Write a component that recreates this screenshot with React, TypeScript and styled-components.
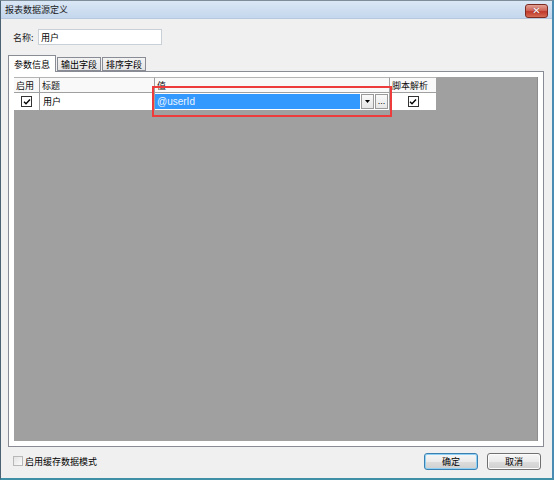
import React from "react";
import styled, { createGlobalStyle } from "styled-components";

const Global = createGlobalStyle`
  html, body { margin: 0; padding: 0; background: #ffffff; }
  #root { width: 554px; height: 480px; }
  * { box-sizing: border-box; }
`;

const CJK = `"Noto Sans CJK SC", "Noto Sans", sans-serif`;

const Frame = styled.div`
  width: 554px;
  height: 480px;
  display: flex;
  flex-direction: column;
  background: #f0f0f0;
  border-left: 1px solid #4b6273;
  border-top: 1px solid #7d8d99;
  border-right: 2px solid #4a8bb3;
  border-bottom: 2px solid #3f8fa6;
  font-family: ${CJK};
  font-size: 9px;
  color: #000;
`;

const TitleBar = styled.div`
  height: 18px;
  flex: none;
  display: flex;
  align-items: center;
  justify-content: space-between;
  padding: 0 4px 0 4px;
  background: linear-gradient(#dae7f5, #c4d7ed);
  border-bottom: 1px solid #b5c8de;
`;

const Title = styled.span`
  font-size: 9px;
  color: #1a1a1a;
`;

const CloseBtn = styled.div`
  width: 23px;
  height: 14px;
  margin-top: 2px;
  border: 1px solid #7c2b22;
  border-radius: 3px;
  background: linear-gradient(#e3a195 0%, #d0665a 45%, #c0392b 55%, #d56b52 100%);
  display: flex;
  align-items: center;
  justify-content: center;
  color: #fff;
  font-family: "DejaVu Sans", sans-serif;
  font-weight: bold;
  font-size: 10px;
  line-height: 1;
  text-shadow: 0 0 1px #6d1d14;
`;

const Client = styled.div`
  flex: 1;
  display: flex;
  flex-direction: column;
`;

const NameRow = styled.div`
  margin-top: 10px;
  padding-left: 12px;
  display: flex;
  align-items: center;
  height: 16px;
`;

const Label = styled.span`
  width: 25px;
  color: #222;
`;

const TextInput = styled.div`
  width: 124px;
  height: 16px;
  background: #fff;
  border: 1px solid #c9cfd6;
  padding-left: 2px;
  display: flex;
  align-items: center;
`;

const TabRow = styled.div`
  margin-top: 10px;
  padding-left: 7px;
  height: 16px;
  display: flex;
  align-items: flex-end;
  position: relative;
  z-index: 1;
`;

const Tab = styled.div<{ $active?: boolean }>`
  height: ${(p) => (p.$active ? "17px" : "14px")};
  margin-bottom: ${(p) => (p.$active ? "-1px" : "0")};
  padding: 0 ${(p) => (p.$active ? "5px" : "3px")};
  margin-left: ${(p) => (p.$active ? "0" : "1px")};
  display: flex;
  align-items: center;
  border: 1px solid #898c95;
  border-bottom: ${(p) => (p.$active ? "none" : "1px solid #898c95")};
  background: ${(p) => (p.$active ? "#ffffff" : "linear-gradient(#f3f3f3, #e4e4e4)")};
`;

const Panel = styled.div`
  margin-left: 7px;
  width: 536px;
  height: 376px;
  border: 1px solid #898c95;
  background: #fff;
  padding: 5px;
  display: flex;
`;

const Grid = styled.div`
  flex: 1;
  background: #a0a0a0;
  position: relative;
  border-right: 1px solid #8d8d8d;
`;

const Table = styled.div`
  display: grid;
  grid-template-columns: 26px 115px 235px 47px;
  grid-template-rows: 16px 18px;
  width: 423px;
`;

const HeadCell = styled.div`
  background: #f9f9f9;
  border-right: 1px solid #a0a0a0;
  border-bottom: 1px solid #a0a0a0;
  border-top: 1px solid #b4b4b4;
  padding-left: 2px;
  display: flex;
  align-items: center;
  color: #111;
`;

const Cell = styled.div<{ $center?: boolean; $pad?: number }>`
  background: #fff;
  border-right: 1px solid #a0a0a0;
  border-bottom: 1px solid #a0a0a0;
  display: flex;
  align-items: center;
  justify-content: ${(p) => (p.$center ? "center" : "flex-start")};
  padding-left: ${(p) => p.$pad ?? 0}px;
`;

const Check = styled.div`
  width: 11px;
  height: 11px;
  border: 1px solid #333;
  background: #fff;
  display: flex;
  align-items: center;
  justify-content: center;
`;

const Editor = styled.div`
  flex: 1;
  height: 15px;
  display: flex;
  align-items: stretch;
  margin-right: 1px;
`;

const Selected = styled.div`
  flex: 1;
  background: #3399ff;
  color: #eaf4ff;
  font-family: "Liberation Sans", Arial, sans-serif;
  font-size: 10px;
  padding-left: 2px;
  display: flex;
  align-items: center;
`;

const MiniBtn = styled.div`
  width: 13px;
  margin-left: 1px;
  background: linear-gradient(#fafafa, #e6e6e6);
  border: 1px solid #9a9a9a;
  display: flex;
  align-items: center;
  justify-content: center;
  font-family: "Liberation Sans", Arial, sans-serif;
  font-size: 9px;
  line-height: 1;
  color: #000;
`;

const Highlight = styled.div`
  position: absolute;
  left: 138px;
  top: 9px;
  width: 240px;
  height: 31px;
  border: 2px solid #ee3b3b;
  pointer-events: none;
`;

const BottomRow = styled.div`
  height: 26px;
  margin-top: 1px;
  display: flex;
  align-items: center;
  padding-left: 12px;
  padding-right: 11px;
`;

const SmallBox = styled.div`
  width: 10px;
  height: 10px;
  border: 1px solid #b8b8b8;
  background: linear-gradient(135deg, #e4e4e4, #fbfbfb);
  margin-right: 2px;
`;

const Spacer = styled.div`
  flex: 1;
`;

const Button = styled.div<{ $default?: boolean }>`
  width: 54px;
  height: 17px;
  margin-left: ${(p) => (p.$default ? "0" : "9px")};
  border: 1px solid ${(p) => (p.$default ? "#3c7fb1" : "#707070")};
  border-radius: 3px;
  background: linear-gradient(#f6f6f6 0%, #ebebeb 50%, #dddddd 51%, #cfcfcf 100%);
  box-shadow: ${(p) => (p.$default ? "inset 0 0 0 1px #8fd1f5" : "inset 0 0 0 1px #fcfcfc")};
  display: flex;
  align-items: center;
  justify-content: center;
`;

const Tick = () => (
  <svg width="8" height="8" viewBox="0 0 8 8">
    <path d="M1 3.8 L3 5.8 L7 1.5" fill="none" stroke="#000" strokeWidth="1.4" />
  </svg>
);

const DropArrow = () => (
  <svg width="5" height="3" viewBox="0 0 5 3">
    <path d="M0 0 H5 L2.5 3 Z" fill="#000" />
  </svg>
);

export default function App() {
  return (
    <>
      <Global />
      <Frame>
        <TitleBar>
          <Title>报表数据源定义</Title>
          <CloseBtn>✕</CloseBtn>
        </TitleBar>
        <Client>
          <NameRow>
            <Label>名称:</Label>
            <TextInput>用户</TextInput>
          </NameRow>
          <TabRow>
            <Tab $active>参数信息</Tab>
            <Tab>输出字段</Tab>
            <Tab>排序字段</Tab>
          </TabRow>
          <Panel>
            <Grid>
              <Table>
                <HeadCell>启用</HeadCell>
                <HeadCell>标题</HeadCell>
                <HeadCell>值</HeadCell>
                <HeadCell>脚本解析</HeadCell>
                <Cell $center>
                  <Check>
                    <Tick />
                  </Check>
                </Cell>
                <Cell $pad={3}>用户</Cell>
                <Cell>
                  <Editor>
                    <Selected>@userId</Selected>
                    <MiniBtn>
                      <DropArrow />
                    </MiniBtn>
                    <MiniBtn>...</MiniBtn>
                  </Editor>
                </Cell>
                <Cell $center>
                  <Check>
                    <Tick />
                  </Check>
                </Cell>
              </Table>
              <Highlight />
            </Grid>
          </Panel>
          <BottomRow>
            <SmallBox />
            <span>启用缓存数据模式</span>
            <Spacer />
            <Button $default>确定</Button>
            <Button>取消</Button>
          </BottomRow>
        </Client>
      </Frame>
    </>
  );
}
